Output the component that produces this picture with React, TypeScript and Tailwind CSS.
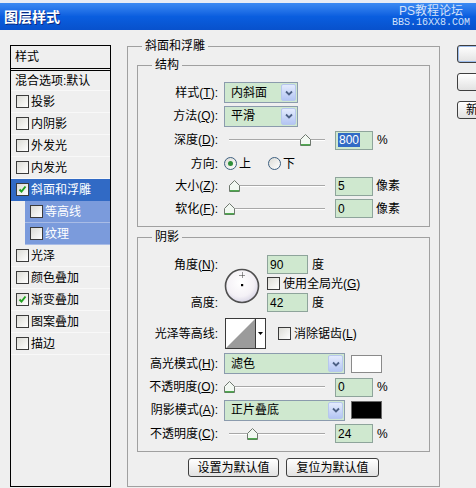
import type { ReactNode } from 'react'

const layers = [
  { name: '投影' },
  { name: '内阴影' },
  { name: '外发光' },
  { name: '内发光' },
  { name: '斜面和浮雕', on: true, active: true },
  { name: '等高线', sub: true },
  { name: '纹理', sub: true },
  { name: '光泽' },
  { name: '颜色叠加' },
  { name: '渐变叠加', on: true },
  { name: '图案叠加' },
  { name: '描边' },
]

function Check({ on }: { on?: boolean }) {
  return (
    <span className="flex h-[13px] w-[13px] shrink-0 items-center justify-center border border-[#3b3b3b] bg-gradient-to-br from-[#dcdcd6] to-white">
      {on && (
        <svg width="9" height="9" viewBox="0 0 9 9">
          <path d="M1.5 4.5l2 2 4-5" stroke="#21a121" strokeWidth="2" fill="none" />
        </svg>
      )}
    </span>
  )
}

function Radio({ on }: { on?: boolean }) {
  return (
    <span className="flex h-[13px] w-[13px] shrink-0 items-center justify-center rounded-full border border-[#3d5f80] bg-gradient-to-br from-[#dcdcd6] to-white">
      {on && <span className="h-[5px] w-[5px] rounded-full bg-[#2f8f3a]" />}
    </span>
  )
}

function Lbl({ children }: { children: ReactNode }) {
  return <span className="w-[80px] shrink-0 text-right">{children}</span>
}

function DropBtn() {
  return (
    <span className="flex w-[15px] items-center justify-center rounded-[2px] border border-[#b7c7ee] bg-gradient-to-b from-[#e4ebfd] to-[#b4c6f3]">
      <svg width="8" height="6" viewBox="0 0 8 6">
        <path d="M1 1.5l3 3 3-3" stroke="#4d6185" strokeWidth="1.8" fill="none" />
      </svg>
    </span>
  )
}

function Select({ value, wide }: { value: string; wide?: boolean }) {
  return (
    <div
      className={`flex h-[21px] shrink-0 border border-[#8b9bad] bg-[#cfe8cf] p-[1px] ${wide ? 'w-[121px]' : 'w-[74px]'}`}
    >
      <span className="flex flex-1 items-center pl-[5px]">{value}</span>
      <DropBtn />
    </div>
  )
}

function Num({ value, selected, wide }: { value: string; selected?: boolean; wide?: boolean }) {
  return (
    <div
      className={`flex h-[19px] shrink-0 items-center border border-[#8ea49b] bg-[#cfe8cf] pl-[2px] ${wide ? 'w-[41px]' : 'w-[38px]'}`}
    >
      {selected ? <span className="bg-[#316ac5] px-[1px] text-white">{value}</span> : <span>{value}</span>}
    </div>
  )
}

function Slider({ at }: { at: number }) {
  return (
    <div className="flex w-[111px] shrink-0 items-center">
      <div className="relative ml-[5px] h-[12px] w-[96px]">
        <div className="absolute left-0 right-0 top-[5px] h-[2px] border-t border-[#a8a8a8] bg-white" />
        <svg className="absolute top-0" style={{ left: at - 5 }} width="11" height="12" viewBox="0 0 11 12">
          <path d="M0.5 5.5L5.5 0.5L10.5 5.5V11.5H0.5Z" fill="#f2f8f2" stroke="#6f786f" />
          <path d="M1 10.8H10" stroke="#3f9f3f" strokeWidth="1.4" />
        </svg>
      </div>
    </div>
  )
}

function Box({ title, className, children }: { title: string; className: string; children: ReactNode }) {
  return (
    <div className={`relative shrink-0 border border-[#a0a0a0] ${className}`}>
      <span className="absolute -top-[8px] left-[14px] bg-[#efefef] px-[3px] leading-[14px]">{title}</span>
      {children}
    </div>
  )
}

function XpButton({ children, className }: { children?: ReactNode; className: string }) {
  return (
    <div
      className={`flex shrink-0 items-center justify-center rounded-[3px] border border-[#3f3f3f] bg-gradient-to-b from-white to-[#e2e2e2] ${className}`}
    >
      {children}
    </div>
  )
}

export default function App() {
  return (
    <div className="flex h-[488px] w-[476px] flex-col overflow-hidden bg-[#efefef] text-[12px] leading-[14px] text-black [font-family:'Liberation_Sans','Noto_Sans_CJK_SC',sans-serif]">
      {/* title bar */}
      <div className="h-[3px] bg-[#e8edf5]" />
      <div className="flex h-[27px] items-center justify-between bg-gradient-to-b from-[#3b8af3] via-[#0a5edf] to-[#0851cc] pl-[4px] pr-[6px]">
        <span className="text-[14px] font-bold text-white [text-shadow:1px_1px_0_#0b2a80]">图层样式</span>
        <div className="flex flex-col items-end leading-[11px] text-[#d2e1fa]">
          <span className="mr-[7px] text-[12px]">PS教程论坛</span>
          <span className="text-[10px] [font-family:'Liberation_Mono',monospace]">BBS.16XX8.COM</span>
        </div>
      </div>

      <div className="flex items-start pl-[10px]">
        {/* style list */}
        <div className="mt-[15px] flex h-[442px] w-[101px] shrink-0 flex-col border border-black">
          <div className="flex h-[25px] items-center border-b-[3px] border-double border-black pl-[4px]">样式</div>
          <div className="flex h-[20px] items-center border-b border-[#f8f8f8] pl-[4px]">混合选项:默认</div>
          {layers.map((l) =>
            l.sub ? (
              <div key={l.name} className="flex h-[22px] pl-[14px]">
                <div className="flex flex-1 items-center gap-[2px] border-b border-[#a9bce6] bg-[#7b9bdc] pl-[5px] text-white">
                  <Check />
                  <span>{l.name}</span>
                </div>
              </div>
            ) : (
              <div
                key={l.name}
                className={`flex h-[22px] items-center gap-[2px] border-b pl-[5px] ${l.active ? 'border-[#316ac5] bg-[#316ac5] text-white' : 'border-[#f8f8f8]'}`}
              >
                <Check on={l.on} />
                <span>{l.name}</span>
              </div>
            ),
          )}
        </div>

        {/* main panel */}
        <Box title="斜面和浮雕" className="ml-[16px] mt-[16px] h-[441px] w-[313px] px-[9px] pt-[18px]">
          <Box title="结构" className="h-[162px] pt-[15px]">
            <div className="flex h-[23px] items-center gap-[6px]">
              <Lbl>样式(<u>T</u>):</Lbl>
              <Select value="内斜面" />
            </div>
            <div className="flex h-[24px] items-center gap-[6px]">
              <Lbl>方法(<u>Q</u>):</Lbl>
              <Select value="平滑" />
            </div>
            <div className="flex h-[24px] items-center">
              <Lbl>深度(<u>D</u>):</Lbl>
              <span className="ml-[6px]" />
              <Slider at={76} />
              <Num value="800" selected />
              <span className="ml-[4px]">%</span>
            </div>
            <div className="flex h-[23px] items-center">
              <Lbl>方向:</Lbl>
              <span className="ml-[6px]" />
              <Radio on />
              <span className="ml-[2px]">上</span>
              <span className="ml-[17px]" />
              <Radio />
              <span className="ml-[2px]">下</span>
            </div>
            <div className="flex h-[22px] items-center">
              <Lbl>大小(<u>Z</u>):</Lbl>
              <span className="ml-[6px]" />
              <Slider at={5} />
              <Num value="5" />
              <span className="ml-[3px]">像素</span>
            </div>
            <div className="flex h-[23px] items-center">
              <Lbl>软化(<u>F</u>):</Lbl>
              <span className="ml-[6px]" />
              <Slider at={0} />
              <Num value="0" />
              <span className="ml-[3px]">像素</span>
            </div>
          </Box>

          <Box title="阴影" className="mt-[10px] h-[215px] pt-[17px]">
            <div className="flex h-[57px]">
              <div className="flex w-[80px] shrink-0 flex-col">
                <span className="flex h-[19px] items-center justify-end">角度(<u>N</u>):</span>
                <span className="h-[19px]" />
                <span className="flex h-[19px] items-center justify-end">高度:</span>
              </div>
              <svg className="ml-[6px] mt-[13px] shrink-0" width="36" height="36" viewBox="0 0 36 36">
                <defs>
                  <radialGradient id="dial" cx="45%" cy="40%" r="60%">
                    <stop offset="0" stopColor="#ffffff" />
                    <stop offset="0.7" stopColor="#f4f1f6" />
                    <stop offset="1" stopColor="#d9d6e6" />
                  </radialGradient>
                </defs>
                <circle cx="18" cy="18" r="16.5" fill="url(#dial)" stroke="#4f4f4f" strokeWidth="1.6" />
                <path d="M15.5 7.5h6M18.5 4.5v6" stroke="#333" strokeWidth="1" strokeDasharray="1 1" />
                <rect x="17" y="16" width="2.2" height="2.2" fill="#000" />
              </svg>
              <div className="ml-[7px] flex flex-col">
                <div className="flex h-[19px] items-center">
                  <Num value="90" wide />
                  <span className="ml-[4px]">度</span>
                </div>
                <div className="flex h-[19px] items-center">
                  <Check />
                  <span className="ml-[3px]">使用全局光(<u>G</u>)</span>
                </div>
                <div className="flex h-[19px] items-center">
                  <Num value="42" wide />
                  <span className="ml-[4px]">度</span>
                </div>
              </div>
            </div>

            <div className="mt-[4px] flex h-[35px] items-center">
              <Lbl>光泽等高线:</Lbl>
              <div className="ml-[7px] flex h-[31px] w-[41px] shrink-0 border border-[#3a3a3a] bg-white">
                <svg width="29" height="29" viewBox="0 0 29 29">
                  <polygon points="0,29 29,0 29,29" fill="#9b9b9b" />
                </svg>
                <div className="flex w-[10px] items-center justify-center border-l border-[#3a3a3a]">
                  <svg width="5" height="3" viewBox="0 0 5 3">
                    <path d="M0 0h5L2.5 3z" fill="#000" />
                  </svg>
                </div>
              </div>
              <span className="ml-[12px]" />
              <Check />
              <span className="ml-[3px]">消除锯齿(<u>L</u>)</span>
            </div>

            <div className="flex h-[25px] items-center gap-[6px]">
              <Lbl>高光模式(<u>H</u>):</Lbl>
              <Select value="滤色" wide />
              <span className="h-[18px] w-[31px] shrink-0 border border-[#8a8a8a] bg-white" />
            </div>
            <div className="flex h-[22px] items-center">
              <Lbl>不透明度(<u>O</u>):</Lbl>
              <span className="ml-[6px]" />
              <Slider at={0} />
              <Num value="0" />
              <span className="ml-[4px]">%</span>
            </div>
            <div className="flex h-[24px] items-center gap-[6px]">
              <Lbl>阴影模式(<u>A</u>):</Lbl>
              <Select value="正片叠底" wide />
              <span className="h-[18px] w-[31px] shrink-0 border border-[#6a6a6a] bg-black" />
            </div>
            <div className="flex h-[23px] items-center">
              <Lbl>不透明度(<u>C</u>):</Lbl>
              <span className="ml-[6px]" />
              <Slider at={23} />
              <Num value="24" />
              <span className="ml-[4px]">%</span>
            </div>
          </Box>

          <div className="mt-[6px] flex justify-center gap-[7px]">
            <XpButton className="h-[19px] w-[91px]">设置为默认值</XpButton>
            <XpButton className="h-[19px] w-[93px]">复位为默认值</XpButton>
          </div>
        </Box>

        {/* dialog buttons, cut off by the window edge */}
        <div className="ml-[17px] mt-[15px] flex w-[90px] shrink-0 flex-col gap-[10px]">
          <XpButton className="h-[18px] w-[90px] border-[#1f3f7a] shadow-[inset_0_0_0_1px_#9cbcec]" />
          <XpButton className="h-[18px] w-[90px] border-[#2e4466]" />
          <XpButton className="h-[18px] w-[90px] !justify-start border-[#2e4466] pl-[8px]">新建样式(W)...</XpButton>
        </div>
      </div>
    </div>
  )
}
